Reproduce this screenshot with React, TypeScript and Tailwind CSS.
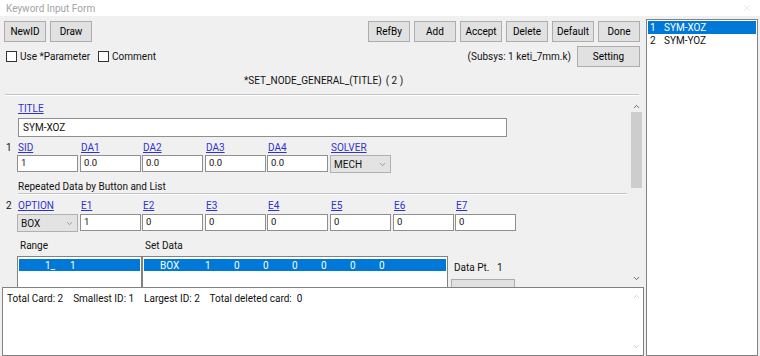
import { ChevronDown, ChevronUp, X } from 'lucide-react'

const font = "font-['Roboto',sans-serif]"

function Btn({ label, w = 'w-[42px]' }: { label: string; w?: string }) {
  return (
    <div className={`${w} h-[21px] flex items-center justify-center border border-[#adadad] bg-[#e1e1e1] text-[10px] text-black`}>
      {label}
    </div>
  )
}

function Check({ label }: { label: string }) {
  return (
    <div className="flex items-center gap-[3px]">
      <div className="w-[11px] h-[11px] border border-[#333] bg-white" />
      <span>{label}</span>
    </div>
  )
}

function Field({ value }: { value: string }) {
  return (
    <div className="w-[61px] h-[17px] border border-[#8f8f8f] bg-white flex items-center pl-[3px] text-[9.5px]">{value}</div>
  )
}

function Combo({ value }: { value: string }) {
  return (
    <div className="w-[61px] h-[18px] border border-[#b0b0b0] bg-[#e3e3e3] flex items-center justify-between pl-[3px] pr-[3px]">
      <span>{value}</span>
      <ChevronDown size={9} strokeWidth={1.5} className="text-[#666]" />
    </div>
  )
}

function Label({ text }: { text: string }) {
  return <span className="pl-[1px] text-[#3030d0] underline underline-offset-[1px]">{text}</span>
}

const cols = 'grid grid-cols-[63px_62px_63px_62px_63px_63px_62px_62px]'

export default function App() {
  const row1 = ['SID', 'DA1', 'DA2', 'DA3', 'DA4', 'SOLVER']
  const row2 = ['OPTION', 'E1', 'E2', 'E3', 'E4', 'E5', 'E6', 'E7']
  return (
    <div className={`${font} w-[760px] h-[356px] bg-[#f0f0f0] flex flex-col overflow-hidden text-[10px] text-[#111]`}>
      <div className="h-[16px] bg-white flex items-center justify-between pl-[6px] pr-[8px]">
        <span className="text-[#a3a3a3]">Keyword Input Form</span>
        <X size={10} strokeWidth={1} className="text-[#c8c8c8]" />
      </div>

      <div className="flex flex-1 min-h-0">
        <div className="w-[644px] flex flex-col pt-[5px]">
          <div className="flex px-[4px] gap-[4px]">
            <Btn label="NewID" />
            <Btn label="Draw" />
            <div className="flex-1" />
            {['RefBy', 'Add', 'Accept', 'Delete', 'Default', 'Done'].map(b => (
              <Btn key={b} label={b} />
            ))}
          </div>

          <div className="mt-[4px] h-[21px] flex items-center pl-[6px] pr-[4px]">
            <Check label="Use *Parameter" />
            <div className="ml-[8px]">
              <Check label="Comment" />
            </div>
            <span className="ml-auto mr-[6px]">(Subsys: 1 keti_7mm.k)</span>
            <Btn label="Setting" w="w-[63px]" />
          </div>

          <div className="h-[26px] flex items-center pl-[244px]">
            <span>*SET_NODE_GENERAL_(TITLE)</span>
            <span className="ml-[4px]">( 2 )</span>
          </div>
          <div className="mt-[1px] mx-[5px] h-[2px] border-t border-[#c4c4c4] border-b border-b-white" />

          <div className="mt-[1px] h-[190px] flex">
            <div className="flex-1 overflow-hidden pt-[4px]">
              <div className="h-[14px] flex items-center pl-[17px]">
                <Label text="TITLE" />
              </div>
              <div className="mt-[3px] ml-[18px] w-[489px] h-[19px] border border-[#8f8f8f] bg-white flex items-center pl-[4px]">
                SYM-XOZ
              </div>

              <div className="mt-[3px] h-[14px] flex items-center">
                <span className="w-[17px] pl-[6px]">1</span>
                <div className={cols}>
                  {row1.map(l => (
                    <Label key={l} text={l} />
                  ))}
                </div>
              </div>
              <div className="mt-[1px] flex">
                <div className="w-[17px]" />
                <div className={cols}>
                  {['1', '0.0', '0.0', '0.0', '0.0'].map((v, i) => (
                    <Field key={i} value={v} />
                  ))}
                  <Combo value="MECH" />
                </div>
              </div>

              <div className="mt-[6px] h-[14px] flex items-center pl-[18px]">Repeated Data by Button and List</div>
              <div className="ml-[18px] w-[609px] h-[2px] border-t border-[#c4c4c4] border-b border-b-white" />

              <div className="mt-[3px] h-[14px] flex items-center">
                <span className="w-[17px] pl-[6px]">2</span>
                <div className={cols}>
                  {row2.map(l => (
                    <Label key={l} text={l} />
                  ))}
                </div>
              </div>
              <div className="mt-[2px] flex">
                <div className="w-[17px]" />
                <div className={cols}>
                  <Combo value="BOX" />
                  {['1', '0', '0', '0', '0', '0', '0'].map((v, i) => (
                    <Field key={i} value={v} />
                  ))}
                </div>
              </div>

              <div className="mt-[6px] h-[14px] flex items-center">
                <span className="w-[142px] pl-[20px]">Range</span>
                <span className="pl-[3px]">Set Data</span>
              </div>
              <div className="mt-[4px] flex pl-[17px]">
                <div className="w-[125px] h-[40px] border border-[#828282] bg-white pt-[2px] px-[1px]">
                  <div className="h-[12px] bg-[#0078d7] text-white flex items-center whitespace-pre pl-[26px]">
                    {'1_      1'}
                  </div>
                </div>
                <div className="w-[306px] h-[40px] border border-[#828282] bg-white pt-[2px] px-[1px]">
                  <div className="h-[12px] bg-[#0078d7] text-white flex items-center pl-[16px]">
                    <span className="w-[45px]">BOX</span>
                    {['1', '0', '0', '0', '0', '0', '0'].map((v, i) => (
                      <span key={i} className="w-[29px]">{v}</span>
                    ))}
                  </div>
                </div>
                <div className="ml-[3px] flex flex-col">
                  <div className="mt-[4px] h-[14px] flex items-center pl-[3px] whitespace-pre">{'Data Pt.   1'}</div>
                  <div className="mt-[5px] w-[64px] h-[21px] border border-[#adadad] bg-[#e1e1e1]" />
                </div>
              </div>
            </div>

            <div className="w-[15px] flex flex-col items-center pb-[4px]">
              <ChevronUp size={9} strokeWidth={2.5} className="mt-[5px] text-[#606060]" />
              <div className="mt-[1px] w-[11px] h-[76px] bg-[#cdcdcd]" />
              <div className="flex-1" />
              <ChevronDown size={9} strokeWidth={2.5} className="text-[#606060]" />
            </div>
          </div>

          <div className="flex-1 ml-[2px] border border-[#828282] bg-white flex">
            <div className="flex-1 pl-[4px] pt-[3px] whitespace-pre">
              {'Total Card: 2    Smallest ID: 1    Largest ID: 2    Total deleted card:  0'}
            </div>
            <div className="w-[14px] flex flex-col items-center justify-between py-[4px]">
              <ChevronUp size={9} strokeWidth={1.5} className="text-[#b0b0b0]" />
              <ChevronDown size={9} strokeWidth={1.5} className="text-[#b0b0b0]" />
            </div>
          </div>
        </div>

        <div className="ml-[2px] mt-[3px] w-[112px] border border-[#828282] bg-white pt-[1px] px-[1px]">
          <div className="h-[13px] bg-[#0078d7] text-white flex items-center pl-[2px]">
            <span className="w-[14px]">1</span>
            <span>SYM-XOZ</span>
          </div>
          <div className="h-[13px] flex items-center pl-[2px]">
            <span className="w-[14px]">2</span>
            <span>SYM-YOZ</span>
          </div>
        </div>
      </div>
    </div>
  )
}
